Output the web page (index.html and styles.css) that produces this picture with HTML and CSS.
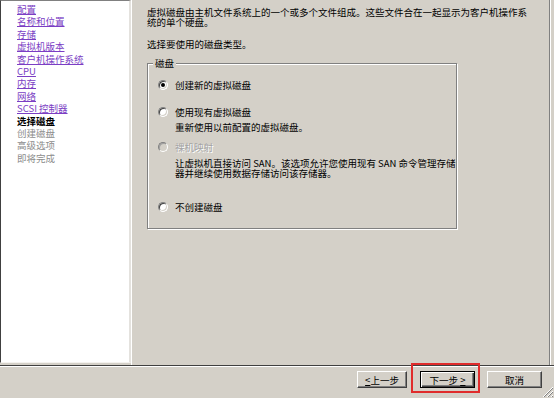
FILE: index.html
```html
<!DOCTYPE html>
<html lang="zh-CN">
<head>
<meta charset="utf-8">
<link rel="stylesheet" href="styles.css">
</head>
<body>
<div class="wizard">
  <div class="top">
    <nav class="nav">
      <a class="link">配置</a>
      <a class="link">名称和位置</a>
      <a class="link">存储</a>
      <a class="link">虚拟机版本</a>
      <a class="link">客户机操作系统</a>
      <a class="link">CPU</a>
      <a class="link">内存</a>
      <a class="link">网络</a>
      <a class="link">SCSI 控制器</a>
      <span class="cur">选择磁盘</span>
      <span class="dis">创建磁盘</span>
      <span class="dis">高级选项</span>
      <span class="dis">即将完成</span>
    </nav>
    <main class="main">
      <p class="intro">虚拟磁盘由主机文件系统上的一个或多个文件组成。这些文件合在一起显示为客户机操作系统的单个硬盘。</p>
      <p class="prompt">选择要使用的磁盘类型。</p>
      <fieldset class="group">
        <legend class="legend">磁盘</legend>
        <div class="opt opt-first">
          <span class="radio on"></span>
          <span class="label">创建新的虚拟磁盘</span>
        </div>
        <div class="opt opt-second">
          <span class="radio"></span>
          <span class="label">使用现有虚拟磁盘</span>
          <span class="desc">重新使用以前配置的虚拟磁盘。</span>
        </div>
        <div class="opt opt-third">
          <span class="radio off"></span>
          <span class="label disabled">裸机映射</span>
          <span class="desc">让虚拟机直接访问 SAN。该选项允许您使用现有 SAN 命令管理存储<br>器并继续使用数据存储访问该存储器。</span>
        </div>
        <div class="opt opt-fourth">
          <span class="radio"></span>
          <span class="label">不创建磁盘</span>
        </div>
      </fieldset>
    </main>
  </div>
  <div class="sep"></div>
  <div class="footer">
    <button class="btn btn-back"><span class="acc">&lt;</span>上一步</button>
    <span class="hl">
      <button class="btn btn-next default">下一步 <span class="acc">&gt;</span></button>
      <span class="redbox"></span>
    </span>
    <button class="btn btn-cancel">取消</button>
    <svg class="grip" width="12" height="12" viewBox="0 0 12 12">
      <path d="M11 1 L1 11 M11 5 L5 11 M11 9 L9 11" stroke="#fff" stroke-width="1"/>
      <path d="M11 2 L2 11 M11 6 L6 11 M11 10 L10 11" stroke="#808080" stroke-width="1"/>
    </svg>
  </div>
</div>
</body>
</html>
```
FILE: styles.css
```css
* { box-sizing: border-box; }
html, body {
  margin: 0;
  padding: 0;
  background: #d4d0c8;
}
body {
  width: 554px;
  height: 398px;
  overflow: hidden;
  font-family: "Noto Sans CJK SC", "Liberation Sans", sans-serif;
  font-size: 9.5px;
  color: #000;
}
.wizard {
  position: relative;
  width: 554px;
  height: 398px;
  display: flex;
  flex-direction: column;
}
.top {
  display: flex;
  height: 365px;
}
.nav {
  width: 131px;
  height: 363px;
  background: #fff;
  border-left: 1px solid #404040;
  border-top: 1px solid #808080;
  border-right: 2px solid #e4e2de;
  border-bottom: 1px solid #f4f2ee;
  padding: 2px 0 0 16px;
  display: flex;
  flex-direction: column;
}
.nav a, .nav span {
  display: block;
  line-height: 12.4px;
  height: 12.4px;
  white-space: nowrap;
}
.link {
  color: #7b3ec4;
  text-decoration: underline;
}
.cur {
  font-weight: bold;
  color: #000;
}
.dis {
  color: #8c8c8c;
}
.main {
  flex: 1;
  margin-right: 4px;
  border-left: 1px solid #fff;
  border-right: 1px solid #808080;
  box-shadow: 1px 0 0 #fff;
  padding: 7px 0 0 15px;
  line-height: 10px;
}
.intro {
  margin: 0;
  width: 386px;
}
.prompt {
  margin: 12px 0 0 0;
}
.group {
  margin: 9px 0 0 0;
  width: 309px;
  height: 171px;
  border: 1px solid #808080;
  box-shadow: 1px 1px 0 #fff, inset 1px 1px 0 #fff;
  padding: 12px 0 0 10px;
}
.legend {
  padding: 0 2px;
  margin-left: -5px;
  line-height: 10px;
  background: #d4d0c8;
}
.opt {
  display: grid;
  grid-template-columns: 17px auto;
  line-height: 10px;
}
.opt .radio {
  grid-column: 1;
  grid-row: 1;
  align-self: center;
}
.opt .label {
  grid-column: 2;
  grid-row: 1;
}
.opt .desc {
  grid-column: 2;
  grid-row: 2;
  margin-top: 5px;
  white-space: nowrap;
}
.opt-third .desc { margin-top: 6px; }
.opt-second { margin-top: 17px; }
.opt-third { margin-top: 10px; }
.opt-fourth { margin-top: 24px; }
.radio {
  display: block;
  width: 10px;
  height: 10px;
  border-radius: 50%;
  background: #fff;
  border: 1px solid;
  border-color: #808080 #ffffff #ffffff #808080;
  box-shadow: inset 1px 1px 0 #404040, inset -1px -1px 0 #d4d0c8;
  position: relative;
}
.radio.on::after {
  content: "";
  position: absolute;
  left: 2px;
  top: 2px;
  width: 4px;
  height: 4px;
  border-radius: 50%;
  background: #000;
}
.radio.off {
  background: #d4d0c8;
  box-shadow: inset 1px 1px 0 #a0a0a0;
}
.disabled {
  color: #a4a4a4;
  text-shadow: 1px 1px 0 #fff;
}
.sep {
  height: 2px;
  border-top: 1px solid #404040;
  border-bottom: 1px solid #fff;
}
.footer {
  flex: 1;
  display: flex;
  justify-content: flex-end;
  align-items: flex-start;
  padding: 4px 12px 0 0;
}
.btn {
  height: 17px;
  padding: 0;
  font-family: "Noto Sans CJK SC", "Liberation Sans", sans-serif;
  font-size: 9.5px;
  line-height: 14px;
  color: #000;
  background: #d4d0c8;
  border: 1px solid;
  border-color: #fff #404040 #404040 #fff;
  box-shadow: inset -1px -1px 0 #808080;
}
.btn.default {
  border: 1px solid #000;
  box-shadow: inset 1px 1px 0 #fff, inset -1px -1px 0 #404040, inset -2px -2px 0 #808080;
}
.acc { text-decoration: underline; }
.btn-back { width: 50px; }
.hl {
  position: relative;
  margin-left: 13px;
  display: block;
}
.btn-next { width: 55px; display: block; }
.btn-cancel { width: 55px; margin-left: 12px; }
.redbox {
  position: absolute;
  left: -9px;
  top: -8px;
  right: -5px;
  bottom: -5px;
  border: 2px solid #e02c2c;
}
.grip {
  position: absolute;
  right: 0;
  bottom: 0;
}
```
